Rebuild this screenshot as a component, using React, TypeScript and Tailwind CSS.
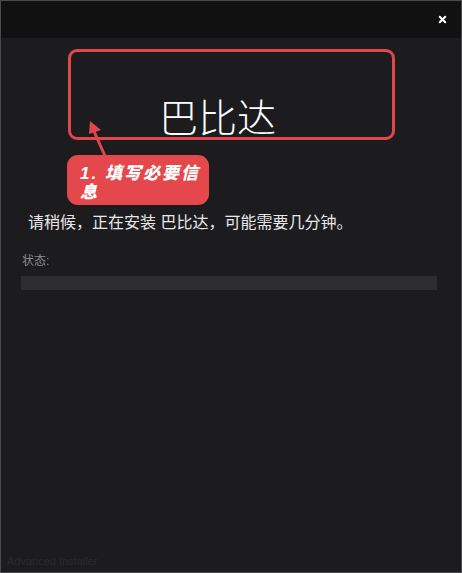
import { X } from 'lucide-react';

export default function App() {
  return (
    <div
      className="w-[462px] h-[573px] flex flex-col bg-[#1c1c1e] border border-[#4a4a4a] overflow-hidden"
      style={{ fontFamily: '"Liberation Sans", "Noto Sans CJK SC", sans-serif' }}
    >
      <div className="h-[37px] shrink-0 bg-[#111111] flex items-center justify-end pr-[13px]">
        <X className="w-[11px] h-[11px] text-white" strokeWidth={4.5} />
      </div>

      <div className="relative flex-1 flex flex-col">
        <div className="mt-[11px] ml-[67px] w-[327px] h-[91px] border-[3px] border-[#e0474c] rounded-[9px] flex items-end justify-center">
          <span className="text-[39px] leading-[44px] text-white font-light -mb-[4px] mr-[28px]">巴比达</span>
        </div>

        <svg className="absolute left-[80px] top-[78px]" width="40" height="45" viewBox="0 0 40 45">
          <line x1="24" y1="40" x2="12" y2="13" stroke="#e0474c" strokeWidth="3" strokeLinecap="round" />
          <polygon points="9,5 20,14 8,18" fill="#e0474c" />
        </svg>

        <div className="mt-[15px] ml-[66px] w-[142px] h-[50px] rounded-[11px] bg-[#e5484c] pl-[13px] pr-[6px] pt-[9px]">
          <p className="text-[17px] leading-[19px] font-black italic text-white tracking-[2px]">1. 填写必要信息</p>
        </div>

        <p className="mt-[6px] ml-[27px] text-[16px] leading-[24px] text-[#e8e8e8]">
          请稍候，正在安装 巴比达，可能需要几分钟。
        </p>

        <p className="mt-[18px] ml-[21px] text-[12px] leading-[16px] text-[#8c8c8c]">状态:</p>

        <div className="mt-[7px] ml-[20px] mr-[24px] h-[14px] bg-[#2d2d2f]" />

        <div className="mt-auto mb-[3px] ml-[6px] text-[11px] leading-[16px] text-[#2a2a2c]">
          Advanced Installer
        </div>
      </div>
    </div>
  );
}
